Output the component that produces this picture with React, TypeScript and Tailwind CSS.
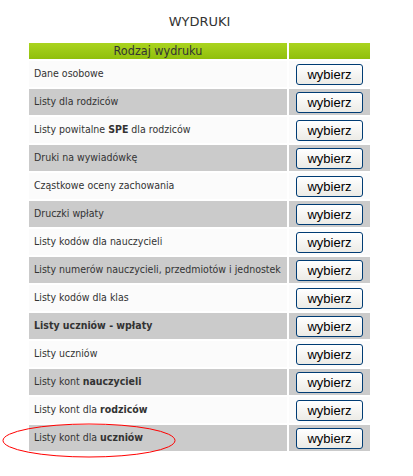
const rows: { label: React.ReactNode }[] = [
  { label: "Dane osobowe" },
  { label: "Listy dla rodziców" },
  { label: <>Listy powitalne <b>SPE</b> dla rodziców</> },
  { label: "Druki na wywiadówkę" },
  { label: "Cząstkowe oceny zachowania" },
  { label: "Druczki wpłaty" },
  { label: "Listy kodów dla nauczycieli" },
  { label: "Listy numerów nauczycieli, przedmiotów i jednostek" },
  { label: "Listy kodów dla klas" },
  { label: <b>Listy uczniów - wpłaty</b> },
  { label: "Listy uczniów" },
  { label: <>Listy kont <b>nauczycieli</b></> },
  { label: <>Listy kont dla <b>rodziców</b></> },
  { label: <>Listy kont dla <b>uczniów</b></> },
];

export default function App() {
  return (
    <div className="relative w-[413px] h-[476px] bg-white overflow-hidden font-['DejaVu_Sans_Condensed','Liberation_Sans',sans-serif] text-[#333]">
      <h1 className="pt-[14px] pl-[27px] w-[372px] text-center font-['DejaVu_Sans',sans-serif] text-[13px] leading-[16px] text-[#333]">
        WYDRUKI
      </h1>

      <div className="mt-[11px] ml-[27px] grid grid-cols-[258px_81px] gap-[2px] p-[2px] w-[345px]">
        <div className="h-[16px] bg-gradient-to-b from-[#aad41e] to-[#90bf0b] text-center text-[12.5px] leading-[16px] text-[#333]">
          Rodzaj wydruku
        </div>
        <div className="h-[16px] bg-gradient-to-b from-[#aad41e] to-[#90bf0b]" />

        {rows.map((r, i) => {
          const bg = i % 2 === 0 ? "bg-[#fbfbfb]" : "bg-[#cbcbcb]";
          return (
            <div key={i} className="contents">
              <div className={`${bg} h-[26px] flex items-center pl-[5px] text-[10.5px] whitespace-nowrap`}>
                <span>{r.label}</span>
              </div>
              <div className={`${bg} h-[26px] flex items-center justify-center`}>
                <button className="w-[67px] h-[21px] rounded-[3px] border border-[#003c74] bg-gradient-to-b from-white to-[#ecebe6] font-['Liberation_Sans',sans-serif] text-[13px] leading-[19px] text-black">
                  wybierz
                </button>
              </div>
            </div>
          );
        })}
      </div>

      <svg className="absolute left-[2px] top-[423px]" width="174" height="36" viewBox="0 0 174 36">
        <ellipse cx="87" cy="17.5" rx="86" ry="16.5" fill="none" stroke="#ff0000" strokeWidth="1" />
      </svg>
    </div>
  );
}
